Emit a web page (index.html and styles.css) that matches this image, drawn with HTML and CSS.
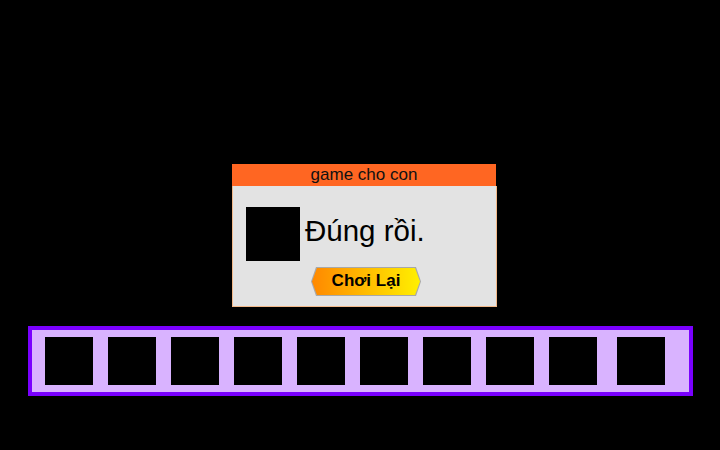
FILE: index.html
```html
<!DOCTYPE html>
<html>
<head>
<meta charset="utf-8">
<link rel="stylesheet" href="styles.css">
</head>
<body>
<div class="dialog">
  <div class="title">game cho con</div>
  <div class="content">
    <div class="row">
      <div class="pic"></div>
      <div class="msg">Đúng rồi.</div>
    </div>
    <div class="btn-outer"><div class="btn">Chơi Lại</div></div>
  </div>
</div>
<div class="bar">
  <div class="slot"></div>
  <div class="slot"></div>
  <div class="slot"></div>
  <div class="slot"></div>
  <div class="slot"></div>
  <div class="slot"></div>
  <div class="slot"></div>
  <div class="slot"></div>
  <div class="slot"></div>
  <div class="slot last"></div>
</div>
</body>
</html>
```
FILE: styles.css
```css
html, body {
  margin: 0;
  padding: 0;
  background: #000;
  font-family: "Liberation Sans", Arial, sans-serif;
}
body {
  width: 720px;
  height: 450px;
  overflow: hidden;
  padding-top: 164px;
  box-sizing: border-box;
}
.dialog {
  margin-left: 232px;
  width: 265px;
}
.title {
  width: 264px;
  height: 22px;
  background: #ff6622;
  color: #111;
  font-size: 17px;
  line-height: 21px;
  text-align: center;
}
.content {
  background: #e3e3e3;
  border: 1px solid #f2b98a;
  border-top: none;
  padding: 21px 0 10px 13px;
}
.row {
  display: flex;
  align-items: center;
}
.pic {
  width: 54px;
  height: 54px;
  background: #000;
}
.msg {
  font-size: 29.5px;
  line-height: 32px;
  color: #000;
  margin-left: 5px;
  margin-bottom: 6px;
}
.btn-outer {
  margin: 6px 0 0 65px;
  width: 110px;
  height: 29px;
  padding: 1px;
  box-sizing: border-box;
  background: #a8a8a8;
  clip-path: polygon(5px 0, 105px 0, 110px 50%, 105px 100%, 5px 100%, 0 50%);
}
.btn {
  width: 100%;
  height: 100%;
  background: linear-gradient(to right, #ff8800, #fff000);
  clip-path: polygon(5px 0, calc(100% - 5px) 0, 100% 50%, calc(100% - 5px) 100%, 5px 100%, 0 50%);
  font-weight: bold;
  font-size: 17px;
  line-height: 25px;
  text-align: center;
  color: #000;
}
.bar {
  margin: 19px 27px 0 28px;
  border: 4px solid #7a00ff;
  background: #d9b3ff;
  padding: 7px 0 7px 13px;
  display: flex;
  gap: 15px;
}
.slot {
  width: 48px;
  height: 48px;
  background: #000;
  flex: none;
}
.slot.last {
  margin-left: 5px;
}
```
